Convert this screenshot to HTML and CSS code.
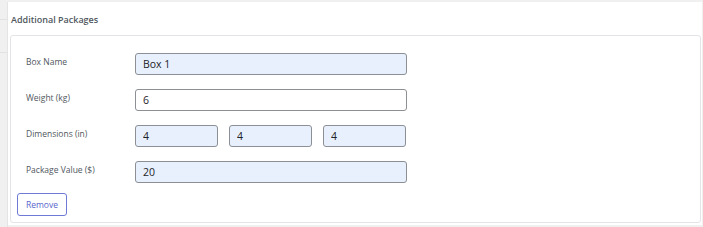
FILE: index.html
```html
<!DOCTYPE html>
<html lang="en">
<head>
    <meta charset="UTF-8">
    <title>Additional Packages</title>
    <link rel="stylesheet" href="styles.css">
</head>
<body>
    <div class="side"></div>
    <div class="panel">
        <h2 class="panel-title">Additional Packages</h2>

        <div class="package">
            <div class="row">
                <label for="box_name">Box Name</label>
                <input type="text" id="box_name" class="filled wide" value="Box 1">
            </div>
            <div class="row">
                <label for="weight">Weight (kg)</label>
                <input type="text" id="weight" class="wide" value="6">
            </div>
            <div class="row">
                <label>Dimensions (in)</label>
                <div class="dims">
                    <input type="text" class="filled" value="4">
                    <input type="text" class="filled" value="4">
                    <input type="text" class="filled" value="4">
                </div>
            </div>
            <div class="row">
                <label for="value">Package Value ($)</label>
                <input type="text" id="value" class="filled wide" value="20">
            </div>
            <button type="button" class="remove">Remove</button>
        </div>
    </div>
</body>
</html>
```

FILE: styles.css
```css
body {
    margin: 0;
    background-color: #f0f0f1;
    font-family: "Open Sans", "Noto Sans", sans-serif;
    color: #3c434a;
    display: flex;
    padding-top: 2px;
    height: 225px;
}
.side {
    width: 7px;
    border-right: 1px solid #e4e4e4;
    background: linear-gradient(#f0f0f1 17px, #e2e2e2 17px, #e2e2e2 18px, #f0f0f1 18px, #f0f0f1 50px, #e2e2e2 50px, #e2e2e2 51px, #f0f0f1 51px);
}
.panel {
    width: 694px;
    height: 223px;
    background-color: white;
    box-sizing: border-box;
    padding: 0 1px 0 2px;
}
.panel-title {
    font-size: 9px;
    font-weight: 600;
    color: #50575e;
    margin: 0;
    padding: 11px 0 0 1px;
    height: 22px;
}
.package {
    border: 1px solid #e2e4e7;
    border-radius: 3px;
    height: 188px;
    box-sizing: border-box;
    padding: 17px 7px 0 6px;
}
.row {
    display: flex;
    align-items: center;
    height: 22px;
    margin-bottom: 14px;
}
.row label {
    width: 109px;
    padding-left: 9px;
    font-size: 8.5px;
    color: #50575e;
    margin-top: -5px;
}
input {
    height: 22px;
    box-sizing: border-box;
    border: 1px solid #8c8f94;
    border-radius: 3px;
    padding: 0 7px;
    font-family: inherit;
    font-size: 10.5px;
    color: #1d2327;
    background-color: white;
}
input.filled {
    background-color: #e8f0fe;
}
.wide {
    width: 272px;
}
.dims {
    display: flex;
    gap: 11px;
}
.dims input {
    width: 83px;
}
.remove {
    display: block;
    margin-top: -4px;
    width: 50px;
    height: 23px;
    background-color: white;
    border: 1px solid #6e7ad6;
    border-radius: 3px;
    color: #5866cc;
    font-family: inherit;
    font-size: 8.5px;
    padding: 0;
}
```
